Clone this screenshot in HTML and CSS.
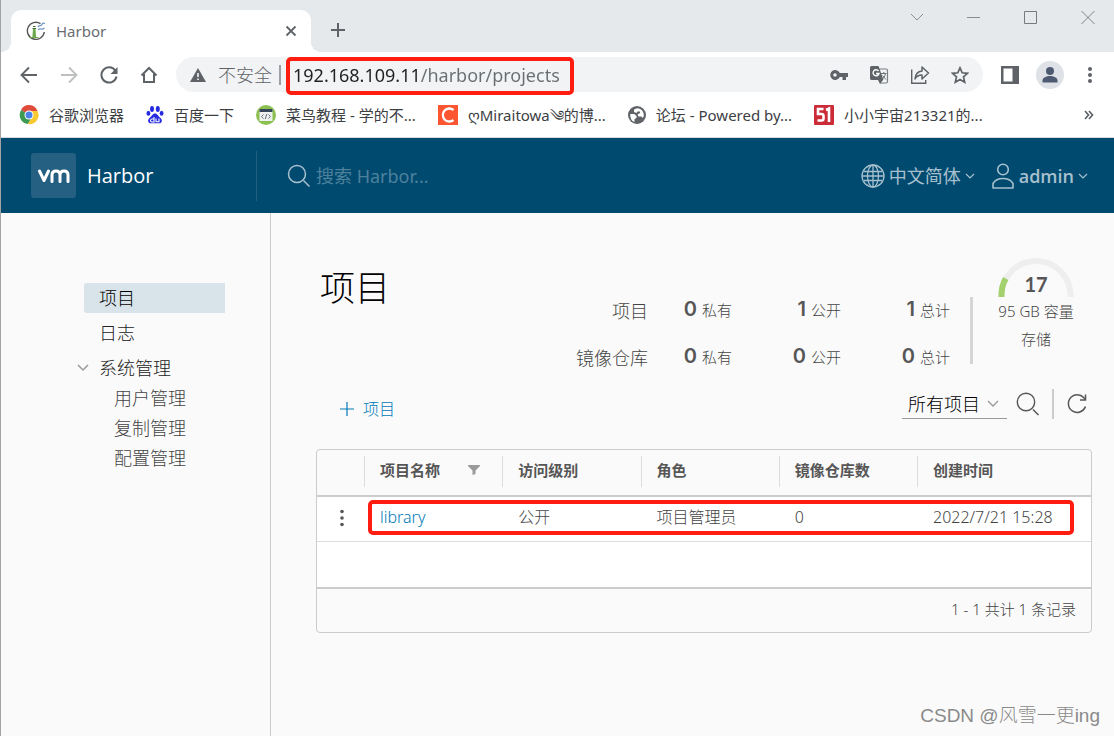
FILE: index.html
```html
<!DOCTYPE html>
<html lang="zh-CN">
<head>
<meta charset="utf-8">
<title>Harbor</title>
<meta name="viewport" content="width=device-width, initial-scale=1">
<link rel="stylesheet" href="styles.css">
</head>
<body>
<div class="window">
  <div class="tabstrip">
    <div class="tab">
      <svg class="favicon" width="20" height="20" viewBox="0 0 20 20"><path d="M14.500 2.700A8.500 8.500 0 1 0 18.300 11" fill="none" stroke="#555" stroke-width="1.400"/><path d="M6.300 16.500L7 8h2.500l.7 8.500z" fill="#6fab4d"/><path d="M6.500 7.500h3.500M7 5.500h2.500" stroke="#3f6b2c" stroke-width="1"/><path d="M3.500 16.500h9" stroke="#6fab4d" stroke-width="1"/><path d="M12 6c1-3 3 0 4-2.500s2-1 3-1M12 9c2-2.500 3.500.5 6.500-2" stroke="#6c97c6" stroke-width="1.200" fill="none"/></svg>
      <span class="tab-title">Harbor</span>
      <button class="icon-btn" aria-label="关闭标签页"><svg width="12" height="12" viewBox="0 0 12 12"><path d="M1.500 1.500l9 9M10.500 1.500l-9 9" stroke="#5f6368" stroke-width="1.800"/></svg></button>
    </div>
    <button class="icon-btn new-tab" aria-label="新标签页"><svg width="16" height="16" viewBox="0 0 16 16"><path d="M8 1v14M1 8h14" stroke="#5f6368" stroke-width="2"/></svg></button>
    <div class="window-controls">
      <button class="icon-btn" aria-label="搜索标签页"><svg width="14" height="14" viewBox="0 0 14 14"><path d="M1 4l6 6 6-6" fill="none" stroke="#8a8d90"/></svg></button>
      <button class="icon-btn" aria-label="最小化"><svg width="14" height="14" viewBox="0 0 14 14"><path d="M0 7.500h13" stroke="#8a8d90"/></svg></button>
      <button class="icon-btn" aria-label="最大化"><svg width="14" height="14" viewBox="0 0 14 14"><path d="M.5 1.500h12v12H.5z" fill="none" stroke="#77797b"/></svg></button>
      <button class="icon-btn" aria-label="关闭"><svg width="14" height="14" viewBox="0 0 14 14"><path d="M.5 1l13 13M13.500 1l-13 13" stroke="#808386"/></svg></button>
    </div>
  </div>

  <div class="toolbar">
    <button class="icon-btn" aria-label="后退"><svg width="18" height="18" viewBox="0 0 18 18"><path d="M17 9H2M9 1.500L1.500 9 9 16.500" fill="none" stroke="#5f6368" stroke-width="1.900"/></svg></button>
    <button class="icon-btn" aria-label="前进"><svg width="18" height="18" viewBox="0 0 18 18"><path d="M1 9h15M9 1.500L16.500 9 9 16.500" fill="none" stroke="#bdbfc1" stroke-width="1.900"/></svg></button>
    <button class="icon-btn" aria-label="重新加载"><svg width="18" height="18" viewBox="0 0 18 18"><path d="M15.300 4.600A7.600 7.600 0 1 0 16.500 10.500" fill="none" stroke="#5f6368" stroke-width="2"/><path d="M17.500 1v7H10.500z" fill="#5f6368"/></svg></button>
    <button class="icon-btn" aria-label="主页"><svg width="18" height="18" viewBox="0 0 18 18"><path d="M1.500 9.500L9 2l7.500 7.500M4 8v8h10V8" fill="none" stroke="#5f6368" stroke-width="2"/></svg></button>
    <div class="omnibox">
      <button class="security"><svg width="16" height="14" viewBox="0 0 16 14"><path d="M8 0l8 14H0z" fill="#5f6368"/><path d="M8 5v4M8 10.500v1.500" stroke="#f1f3f4" stroke-width="1.600"/></svg><span>不安全</span></button>
      <span class="omni-sep"></span>
      <div class="url-wrap">
        <input class="url" type="text" aria-label="地址" value="192.168.109.11/harbor/projects">
      </div>
      <div class="omni-actions">
        <button class="icon-btn" aria-label="密码"><svg width="18" height="18" viewBox="0 0 18 18"><path d="M9.800 7a5 5 0 1 0 0 4H12.500v3H16v-3h2V7zM5 10.800a1.800 1.800 0 1 1 0-3.600 1.800 1.800 0 0 1 0 3.600z" fill="#5f6368"/></svg></button>
        <button class="icon-btn" aria-label="翻译"><svg width="20" height="20" viewBox="0 0 20 20"><path d="M8 4h9q1.500 0 1.500 1.500v11q0 1.500-1.500 1.500h-6" fill="none" stroke="#7b7e82" stroke-width="1.200"/><path d="M2.500 1h7l5 14H2.500Q1 15 1 13.500v-11Q1 1 2.500 1zM9 15h5l-3 4z" fill="#5f6368"/><path d="M9.500 6A3 3 0 1 0 10 8.500H7" fill="none" stroke="#fff" stroke-width="1.400"/><path d="M12 8.500h5.500M14.800 7v1.500M16.500 8.500c-.5 3-2 4.500-3 5.500M13.500 10.500l3.500 4" fill="none" stroke="#6d7074"/></svg></button>
        <button class="icon-btn" aria-label="分享"><svg width="20" height="20" viewBox="0 0 20 20"><path d="M1.700 4.500v13.800h14V15" fill="none" stroke="#5f6368" stroke-width="1.400"/><path d="M12 6V2l6.500 6-6.500 6v-4c-3.500 0-5.500 1-7 4 .3-4.500 2.500-7.500 7-8z" fill="none" stroke="#5f6368" stroke-width="1.500" stroke-linejoin="round"/></svg></button>
        <button class="icon-btn" aria-label="收藏"><svg width="18" height="18" viewBox="0 0 18 18"><path d="M9 1.800l2.200 5 5.300.5-4 3.600 1.200 5.300L9 13.400l-4.700 2.800 1.200-5.300-4-3.600 5.300-.5z" fill="none" stroke="#5f6368" stroke-width="1.700"/></svg></button>
      </div>
      <div class="mark mark-url"></div>
    </div>
    <div class="browser-actions">
      <button class="icon-btn" aria-label="侧边栏"><svg width="18" height="18" viewBox="0 0 18 18"><path d="M0 0h18v18H0zM2.500 2.500v13h9v-13z" fill="#5f6368" fill-rule="evenodd"/></svg></button>
      <button class="icon-btn" aria-label="用户"><svg width="28" height="28" viewBox="0 0 28 28"><circle cx="14" cy="14" r="14" fill="#dee1e6"/><circle cx="14" cy="10" r="4" fill="#4e5a71"/><path d="M6.500 21.500v-2c0-3 4-4.500 7.500-4.500s7.500 1.500 7.500 4.500v2z" fill="#4e5a71"/></svg></button>
      <button class="icon-btn" aria-label="菜单"><svg width="18" height="18" viewBox="0 0 18 18"><g fill="#5f6368"><circle cx="9" cy="3" r="2"/><circle cx="9" cy="9" r="2"/><circle cx="9" cy="15" r="2"/></g></svg></button>
    </div>
  </div>

  <nav class="bookmarks" aria-label="书签">
    <a href="#"><svg width="20" height="20" viewBox="0 0 20 20"><path d="M10 10L2 5A9 9 0 0 1 18.500 6H10z" fill="#df4b3b"/><path d="M10 10L2.200 5A9 9 0 0 0 9 19l4-7z" fill="#3c9a52"/><path d="M10 6h8.500A9 9 0 0 1 9 19l4-7z" fill="#f9c932"/><circle cx="10" cy="10" r="4.500" fill="#fff"/><circle cx="10" cy="10" r="3.500" fill="#4a84e8"/></svg>谷歌浏览器</a>
    <a href="#"><svg width="18" height="20" viewBox="0 0 18 20"><g fill="#262be0"><ellipse cx="6" cy="4" rx="2" ry="2.900"/><ellipse cx="11.800" cy="4" rx="2" ry="2.900"/><ellipse cx="2.400" cy="8.300" rx="1.900" ry="2.500"/><ellipse cx="15.600" cy="8.300" rx="1.900" ry="2.500"/><path d="M9 8.500c2.500 0 3 2.500 5.500 4.500 2 1.500 2 5.300-1.500 5.300H5C1.500 18.300 1.500 14.500 3.500 13 6 11 6.500 8.500 9 8.500z"/></g><path d="M8 12v5H6q-1.500-.2-1.500-1.500T6 14h2M10 13.500v3.300h3v-3.300" fill="none" stroke="#fff" stroke-width="1.100"/></svg>百度一下</a>
    <a href="#"><svg width="20" height="20" viewBox="0 0 20 20"><circle cx="10" cy="10" r="10" fill="#8cc152"/><path d="M3.500 4h13v12h-13z" fill="#eef0ed"/><path d="M3.500 4h13v3h-13z" fill="#36475a"/><path d="M7.500 9.500L5.500 11.500l2 2M12.500 9.500l2 2-2 2M10.800 9l-1.500 5" fill="none" stroke="#657080"/></svg>菜鸟教程 - 学的不...</a>
    <a href="#"><svg width="20" height="20" viewBox="0 0 20 20"><path d="M0 0h20v20H0z" fill="#fc5531"/><path d="M15.500 5A6.500 6.500 0 1 0 15.500 15" fill="none" stroke="#fff" stroke-width="2.300"/></svg>ღMiraitowa༄的博...</a>
    <a href="#"><svg width="18" height="18" viewBox="0 0 18 18"><circle cx="9" cy="9" r="9" fill="#5f6368"/><path d="M2.200 8h4l2.300 2v2l-2 1v3C3.500 15 2 12 2.200 8zM6 3.500L9 2.200c4 0 6.800 3 6.800 6.800 0 1-.3 2-.8 3l-1.500-1.500h-3L9.500 8.500 12 7V5.500H9.500L8.500 7 6 6z" fill="#fff"/></svg>论坛 - Powered by...</a>
    <a href="#"><svg width="20" height="20" viewBox="0 0 20 20"><rect width="20" height="20" rx="1" fill="#cb2c38"/><path d="M9.500 4H4v5h3.500q2 0 2 2v2.500q0 2-2 2H3.500M12 5l3-1.500V17" fill="none" stroke="#fff" stroke-width="2.600"/></svg>小小宇宙213321的...</a>
    <button class="icon-btn more" aria-label="更多书签"><svg width="10" height="10" viewBox="0 0 10 10"><path d="M1 1l3.500 4L1 9M5 1l3.500 4L5 9" fill="none" stroke="#5f6368" stroke-width="1.700"/></svg></button>
  </nav>

  <header class="app-header">
    <a class="brand" href="#">
      <span class="logo"><svg width="32" height="14" viewBox="0 0 32 14"><path d="M1.500 2L6 11.500 10.500 2M14 12.500V6q0-4 4-4t4 4v6.500M22 6q0-4 4-4t4 4v6.500" fill="none" stroke="#fff" stroke-width="3" stroke-linecap="round" stroke-linejoin="round"/></svg></span>
      <span>Harbor</span>
    </a>
    <label class="search">
      <svg width="24" height="24" viewBox="0 0 24 24"><circle cx="10" cy="10" r="8.500" fill="none" stroke="#a9c0ce" stroke-width="1.500"/><path d="M16.500 16.500l6 6" stroke="#a9c0ce" stroke-width="1.500"/></svg>
      <input type="text" placeholder="搜索 Harbor..." aria-label="搜索 Harbor">
    </label>
    <div class="header-actions">
      <button class="menu-btn"><svg width="24" height="24" viewBox="0 0 24 24"><g fill="none" stroke="#a7c0ce" stroke-width="1.300"><circle cx="12" cy="12" r="11"/><ellipse cx="12" cy="12" rx="5.500" ry="11"/><path d="M12 1v22M1 12h22M3 7.500h18M3 16.500h18"/></g></svg><span>中文简体</span><svg class="caret" width="10" height="10" viewBox="0 0 10 10"><path d="M1 3l4 4 4-4" fill="none" stroke="#a7c0ce" stroke-width="1.200"/></svg></button>
      <button class="menu-btn user"><svg width="24" height="26" viewBox="0 0 24 26"><g fill="none" stroke="#a7c0ce" stroke-width="1.600"><circle cx="12" cy="6.500" r="5.300"/><path d="M2 25v-4.500q3-5 10-5t10 5V25z" stroke-linejoin="round"/></g></svg><span>admin</span><svg class="caret" width="10" height="10" viewBox="0 0 10 10"><path d="M1 3l4 4 4-4" fill="none" stroke="#a7c0ce" stroke-width="1.200"/></svg></button>
    </div>
  </header>

  <div class="content">
    <nav class="sidenav" aria-label="主导航">
      <a class="nav-link active" href="#">项目</a>
      <a class="nav-link" href="#">日志</a>
      <button class="nav-group"><svg width="12" height="8" viewBox="0 0 12 8"><path d="M1 1l5 5 5-5" fill="none" stroke="#9a9a9a" stroke-width="1.500"/></svg>系统管理</button>
      <a class="sub-link" href="#">用户管理</a>
      <a class="sub-link" href="#">复制管理</a>
      <a class="sub-link" href="#">配置管理</a>
    </nav>

    <main class="main">
      <div class="summary">
        <h1>项目</h1>
        <div class="stats">
          <span class="stat-name">项目</span>
          <span class="stat"><b>0</b>私有</span><span class="stat"><b>1</b>公开</span><span class="stat"><b>1</b>总计</span>
          <span class="stat-name">镜像仓库</span>
          <span class="stat"><b>0</b>私有</span><span class="stat"><b>0</b>公开</span><span class="stat"><b>0</b>总计</span>
        </div>
        <div class="storage">
          <svg width="76" height="40" viewBox="0 0 76 40"><path d="M3.500 40V38.500a34.500 34.500 0 0 1 69 0V40" fill="none" stroke="#eee" stroke-width="6"/><path d="M3.500 40V38.500A34.500 34.500 0 0 1 7.700 21.500" fill="none" stroke="#a3d16e" stroke-width="6"/><text class="gauge-value" x="38" y="35" text-anchor="middle">17</text></svg>
          <span>95 GB 容量</span>
          <span>存储</span>
        </div>
      </div>

      <div class="actions">
        <button class="add-btn"><svg width="16" height="16" viewBox="0 0 16 16"><path d="M8 1v14M1 8h14" stroke="#0079b8" stroke-width="1.200"/></svg>项目</button>
        <div class="filters">
          <div class="select-wrap">
            <select aria-label="项目类型"><option>所有项目</option></select>
            <svg width="12" height="8" viewBox="0 0 12 8"><path d="M1 1l5 5 5-5" fill="none" stroke="#9a9a9a" stroke-width="1.400"/></svg>
          </div>
          <button class="icon-btn" aria-label="搜索"><svg width="24" height="24" viewBox="0 0 24 24"><circle cx="10" cy="10" r="8.700" fill="none" stroke="#565656" stroke-width="1.400"/><path d="M17 17.500l5.500 5.500" stroke="#565656" stroke-width="1.500"/></svg></button>
          <span class="filter-sep"></span>
          <button class="icon-btn" aria-label="刷新"><svg width="22" height="22" viewBox="0 0 22 22"><path d="M19 6.500A8.800 8.800 0 1 0 19.500 13.500" fill="none" stroke="#565656" stroke-width="1.500"/><path d="M19.500 1.500V7H14" fill="none" stroke="#565656" stroke-width="1.500"/></svg></button>
        </div>
      </div>

      <div class="grid-wrap">
        <table class="datagrid">
          <colgroup><col class="col-menu"><col><col><col><col><col class="col-date"></colgroup>
          <thead>
            <tr>
              <th aria-label="操作"><div></div></th>
              <th><div>项目名称<button class="icon-btn" aria-label="筛选"><svg width="12" height="10" viewBox="0 0 12 10"><path d="M0 0h12v1L7.500 5.500V9L4.500 10V5.500L0 1z" fill="#9a9a9a"/></svg></button></div></th>
              <th><div>访问级别</div></th>
              <th><div>角色</div></th>
              <th><div>镜像仓库数</div></th>
              <th><div>创建时间</div></th>
            </tr>
          </thead>
          <tbody>
            <tr>
              <td class="row-menu"><button class="icon-btn" aria-label="行操作"><svg width="18" height="18" viewBox="0 0 18 18"><g fill="#565656"><circle cx="9" cy="2.500" r="1.800"/><circle cx="9" cy="9" r="1.800"/><circle cx="9" cy="15.500" r="1.800"/></g></svg></button></td>
              <td><a href="#">library</a></td>
              <td>公开</td>
              <td>项目管理员</td>
              <td>0</td>
              <td>2022/7/21 15:28</td>
            </tr>
            <tr class="filler"><td colspan="6"></td></tr>
          </tbody>
          <tfoot><tr><td colspan="6">1 - 1 共计 1 条记录</td></tr></tfoot>
        </table>
        <div class="mark mark-row"></div>
      </div>
      <p class="watermark">CSDN @风雪一更ing</p>
    </main>
  </div>
</div>
</body>
</html>
```
FILE: styles.css
```css
* { box-sizing: border-box; }

body {
  margin: 0;
  font-family: "Noto Sans", "Noto Sans CJK SC", sans-serif;
  background: #fafafa;
}

button, input, select { font: inherit; color: inherit; }
button { border: 0; padding: 0; background: none; }
a { color: inherit; text-decoration: none; }
svg { display: block; flex: none; }

.icon-btn { display: flex; align-items: center; justify-content: center; flex: none; }

.window {
  min-height: 100vh;
  display: flex;
  flex-direction: column;
  border-left: 1px solid #a3a3a3;
}

/* Browser chrome */
.tabstrip {
  height: 52px;
  display: flex;
  align-items: flex-start;
  padding: 10px 19px 0 10px;
  background: #e5e9eb;
}
.tab {
  width: 300px;
  height: 42px;
  display: flex;
  align-items: center;
  gap: 10px;
  padding: 0 14px 0 15px;
  border-radius: 10px 10px 0 0;
  background: #fff;
  position: relative;
}
.tab::before, .tab::after {
  content: "";
  position: absolute;
  bottom: 0;
  width: 10px;
  height: 10px;
}
.tab::before { left: -10px; background: radial-gradient(circle at 0 0, #e5e9eb 10px, #fff 10px); }
.tab::after { right: -10px; background: radial-gradient(circle at 100% 0, #e5e9eb 10px, #fff 10px); }
.tab-title { flex: 1; font-size: 15px; color: #6a6d71; }
.new-tab { margin: 12px 0 0 19px; }
.window-controls { margin-left: auto; display: flex; gap: 43px; }

.toolbar {
  height: 45px;
  display: flex;
  align-items: center;
  gap: 22px;
  padding: 0 15px 0 19px;
  background: #fff;
}
.toolbar .icon-btn { min-width: 18px; }
.omnibox {
  flex: 1;
  height: 35px;
  margin: 0 -4px;
  display: flex;
  align-items: center;
  padding: 0 14px;
  border-radius: 18px;
  background: #f1f3f4;
  position: relative;
}
.security { display: flex; align-items: center; gap: 12px; font-size: 18px; line-height: 24px; color: #5f6368; font-weight: 300; }
.omni-sep { width: 2px; height: 20px; margin: 0 12px 0 7px; background: #9aa0a6; }
.url-wrap { flex: 1; min-width: 0; }
.url {
  width: 100%;
  padding: 0;
  border: 0;
  outline: 0;
  font-size: 18px;
  line-height: 24px;
  background: linear-gradient(90deg, #202124 126px, #6a6e72 126px);
  background-clip: text;
  -webkit-background-clip: text;
  -webkit-text-fill-color: transparent;
}
.omni-actions { display: flex; align-items: center; gap: 21px; }
.browser-actions { display: flex; align-items: center; gap: 17px; }

.mark { position: absolute; border: 4px solid #ff1d12; border-radius: 5px; pointer-events: none; }
.mark-url { left: 110px; top: 0; width: 288px; height: 38px; }

.bookmarks {
  height: 41px;
  display: flex;
  align-items: center;
  gap: 22px;
  padding: 0 20px 5px 18px;
  border-bottom: 1px solid #d9dcde;
  background: #fff;
  font-size: 15px;
  line-height: 20px;
  color: #3c4043;
  white-space: nowrap;
}
.bookmarks a { display: flex; align-items: center; gap: 10px; }
.more { margin-left: auto; }

/* Application header */
.app-header {
  height: 75px;
  display: flex;
  align-items: center;
  padding: 0 26px 0 30px;
  background: #004a70;
  color: #a7c0ce;
}
.brand {
  width: 226px;
  height: 50px;
  display: flex;
  align-items: center;
  gap: 11px;
  border-right: 1px solid #205f81;
  font-family: "Open Sans", "Noto Sans CJK SC", sans-serif;
  font-size: 20px;
  color: #fff;
}
.logo {
  width: 45px;
  height: 45px;
  display: flex;
  align-items: center;
  justify-content: center;
  border-radius: 3px;
  background: #255f81;
}
.search { flex: 1; display: flex; align-items: center; gap: 5px; padding-left: 30px; }
.search input {
  flex: 1;
  min-width: 0;
  padding: 0;
  border: 0;
  outline: 0;
  background: none;
  font-size: 18px;
  line-height: 26px;
}
.search input::placeholder { color: #4d819c; opacity: 1; }
.header-actions { display: flex; gap: 16px; }
.menu-btn { display: flex; align-items: center; gap: 4px; font-size: 18px; line-height: 26px; }
.user { font-weight: 600; font-family: "Open Sans", sans-serif; }

/* Body layout */
.content { flex: 1; display: flex; font-weight: 300; }
.sidenav {
  width: 270px;
  flex: none;
  display: flex;
  flex-direction: column;
  padding: 70px 45px 0 83px;
  border-right: 1px solid #ccc;
  font-size: 18px;
  line-height: 30px;
  color: #222;
}
.nav-link { padding-left: 15px; margin-bottom: 5px; }
.nav-link.active { background: #d9e4ea; color: #000; border-radius: 3px 0 0 3px; }
.nav-group {
  display: flex;
  align-items: center;
  gap: 10px;
  margin-left: -7px;
  line-height: 30px;
}
.sub-link { padding-left: 30px; color: #444; }

.main { flex: 1; min-width: 0; padding: 0 22px 0 45px; color: #444; position: relative; }
.summary { display: flex; align-items: flex-start; padding-top: 44px; }
.summary h1 {
  flex: 1;
  margin: 9px 0 0 4px;
  font-size: 35px;
  line-height: 44px;
  font-weight: 300;
  color: #000;
}
.stats {
  display: grid;
  grid-template-columns: 72px 84px 109px 109px;
  grid-auto-rows: 47px;
  align-items: center;
  margin-top: 29px;
  padding-right: 20px;
  text-align: right;
  line-height: 20px;
}
.stat-name { font-size: 18px; padding-top: 3px; }
.stat { font-size: 15px; }
.stat b { margin-right: 5px; font-family: Inter, sans-serif; font-size: 20px; font-weight: 600; color: #565656; }
.storage {
  width: 122px;
  display: flex;
  flex-direction: column;
  align-items: center;
  gap: 8px;
  padding-left: 10px;
  font-size: 15px;
  line-height: 20px;
  position: relative;
}
.storage::before {
  content: "";
  position: absolute;
  left: 0;
  top: 40px;
  width: 3px;
  height: 67px;
  background: #d5d5d5;
}
.storage svg { margin-bottom: -4px; }
.gauge-value { font-family: Lato, sans-serif; font-size: 20px; font-weight: 700; fill: #565656; }

.actions { display: flex; justify-content: space-between; align-items: flex-end; margin-top: 9px; }
.add-btn {
  display: flex;
  align-items: center;
  gap: 8px;
  margin-left: 23px;
  font-size: 16px;
  line-height: 20px;
  color: #0079b8;
}
.filters { display: flex; align-items: center; gap: 9px; padding-right: 4px; }
.select-wrap { width: 105px; display: flex; align-items: center; border-bottom: 1px solid #999; }
.select-wrap select {
  flex: 1;
  width: 86px;
  height: 29px;
  padding: 0 0 0 6px;
  border: 0;
  background: none;
  appearance: none;
  font-size: 18px;
  color: #000;
}
.select-wrap svg { margin-right: 8px; pointer-events: none; }
.filter-sep { width: 2px; height: 30px; margin: 0 3px; background: #ccc; }

.grid-wrap { position: relative; margin-top: 30px; }
.datagrid {
  width: 100%;
  table-layout: fixed;
  border-spacing: 0;
  border: 1px solid #ccc;
  border-radius: 4px;
  font-size: 16px;
  line-height: 24px;
}
.col-menu { width: 47px; }
.col-date { width: 174px; }
.datagrid th, .datagrid td { padding: 0; text-align: left; }
.datagrid th { height: 47px; padding-bottom: 2px; border-bottom: 2px solid #ccc; font-size: 15px; font-weight: 700; color: #565656; }
.datagrid th div {
  height: 31px;
  display: flex;
  align-items: center;
  justify-content: space-between;
  padding: 0 22px 4px 15px;
  border-left: 1px solid #ddd;
}
.datagrid th:first-child div { border-left: 0; }
.datagrid tbody td { height: 45px; padding: 0 0 4px 16px; background: #fff; border-bottom: 1px solid #ddd; }
.datagrid td.row-menu { padding: 0 0 2px 16px; }
.datagrid .filler td { height: 47px; border-bottom: 2px solid #ccc; }
.datagrid td a { color: #0079b8; }
.datagrid tfoot td { height: 43px; padding: 0 15px 4px 0; text-align: right; font-size: 15px; }
.mark-row { left: 52px; right: 18px; top: 51px; height: 35px; }

.watermark {
  position: absolute;
  right: 14px;
  bottom: 6px;
  margin: 0;
  font-family: "Liberation Sans", "Noto Sans CJK SC", sans-serif;
  font-size: 19px;
  line-height: 28px;
  color: #8a8a8a;
}
```
